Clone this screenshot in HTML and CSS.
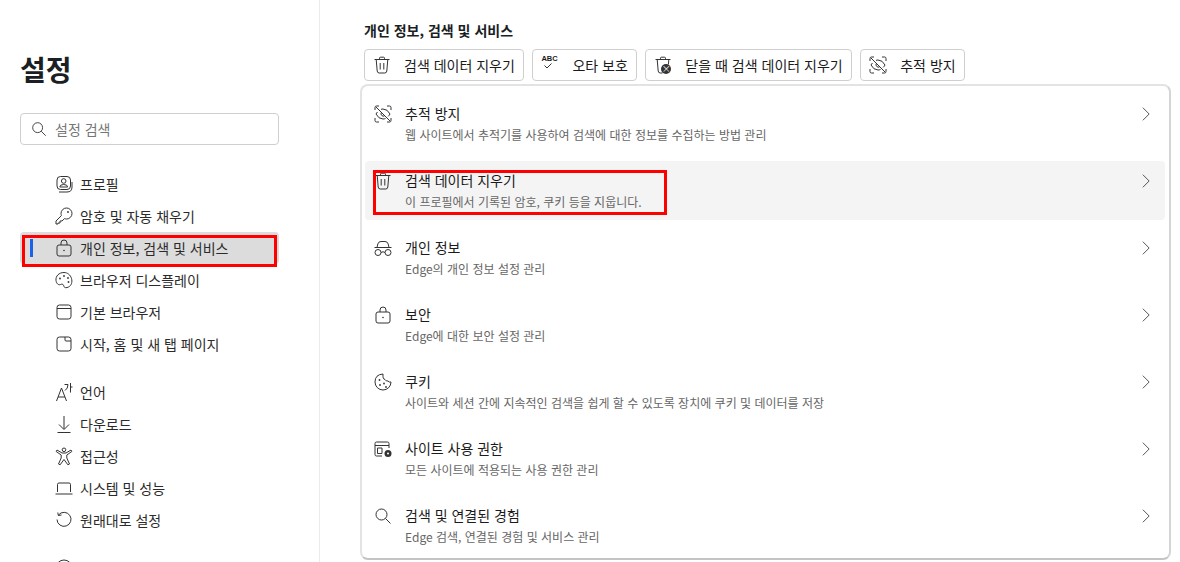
FILE: index.html
```html
<!DOCTYPE html>
<html lang="ko">
<head>
    <meta charset="UTF-8">
    <title>설정</title>
    <link rel="stylesheet" href="styles.css">
</head>
<body>
    <svg class="sprite" width="0" height="0">
        <symbol id="i-trash" viewBox="0 0 20 20"><path d="M2.500 4.500h15M7.500 4.500V3.200q0-1 1-1h3q1 0 1 1v1.300M4.200 4.500l1 11.500q.2 2 2 2h5.600q1.800 0 2-2l1-11.500M8.200 8v6.500M11.800 8v6.500"/></symbol>
        <symbol id="i-trash-open" viewBox="0 0 20 20"><path d="M2.500 4.500h15M7.500 4.500V3.200q0-1 1-1h3q1 0 1 1v1.300M4.200 4.500l1 11.500q.2 2 2 2h2.300M15.800 4.500l-.4 5"/></symbol>
        <symbol id="i-track" viewBox="0 0 20 20"><path d="M2 6V3.500Q2 2 3.500 2H6M14 2h2.500Q18 2 18 3.500V6M18 14v2.500q0 1.500-1.500 1.500H14M6 18H3.500Q2 18 2 16.500V14M3 3l14 14M4.500 8Q3.500 9 3 10q2.500 5 7 5 1.200 0 2.500-.5M8 5.400q1-.4 2-.4 4.500 0 7 5-.6 1.200-1.800 2.400M8.200 8.700a2.500 2.500 0 0 0 3.200 3.300"/></symbol>
        <symbol id="i-glasses" viewBox="0 0 20 20"><path d="M1.500 9.500h17M4 9.500l.8-3.500Q5.500 3.500 8 3.500h4q2.500 0 3.200 2.500l.8 3.500M8 14.500q2-1.500 4 0"/><circle cx="5" cy="14.500" r="3"/><circle cx="15" cy="14.500" r="3"/></symbol>
        <symbol id="i-lock" viewBox="0 0 20 20"><path d="M7 7V5a3 3 0 0 1 6 0v2M5 7h10q2 0 2 2v7q0 2-2 2H5q-2 0-2-2V9q0-2 2-2z"/><circle class="fill" cx="10" cy="12.500" r=".8"/></symbol>
        <symbol id="i-cookie" viewBox="0 0 20 20"><path d="M10 2q-8 .5-8 8a8 8 0 0 0 16 0q-2 .5-3-1-2 .5-3-1.500-2.500-.5-2-5.500z"/><circle class="fill" cx="6.500" cy="8" r=".9"/><circle class="fill" cx="7" cy="13" r=".9"/><circle class="fill" cx="11" cy="11.500" r=".9"/><circle class="fill" cx="13" cy="15" r=".9"/></symbol>
        <symbol id="i-perm" viewBox="0 0 20 20"><path d="M9 17H3.500Q2 17 2 15.500v-11Q2 3 3.500 3h11Q16 3 16 4.500V9M2 6.500h14M4.500 9H9v5.500H4.500z"/><circle class="fill" cx="15" cy="14.500" r="3.500"/><circle class="hole" cx="15" cy="14.500" r="1"/></symbol>
        <symbol id="i-search" viewBox="0 0 20 20"><circle cx="8.500" cy="8.500" r="5.500"/><path d="M12.500 12.500l5 5"/></symbol>
        <symbol id="i-chev" viewBox="0 0 20 20"><path d="M6.500 3l7 7-7 7"/></symbol>
        <symbol id="i-profile" viewBox="0 0 20 20"><rect x="3" y="2.500" width="13.500" height="13" rx="3.500"/><path d="M5 18h8q5 0 5-5V8"/><circle cx="9.700" cy="7" r="2.300"/><path d="M5.800 13q0-2.500 3.900-2.500t3.900 2.500z"/></symbol>
        <symbol id="i-key" viewBox="0 0 20 20"><path d="M12.500 2a5.500 5.500 0 0 1 0 11q-1 0-2-.4L8 15H6v2H4v1H2v-3l5.400-5.400Q7 8.500 7 7.500A5.500 5.500 0 0 1 12.500 2z"/><circle class="fill" cx="14" cy="6" r=".9"/></symbol>
        <symbol id="i-palette" viewBox="0 0 20 20"><path d="M10 2.500c-5 0-8.500 3.500-8 8 .4 3 2.500 5 4.500 4 2-1 3 0 3.500 2 .4 1.500 2.500 1.500 4.500.5 3-1.500 4-5 3-8.500-1-3.500-4-6-7.500-6z"/><circle class="fill" cx="6" cy="8.500" r=".9"/><circle class="fill" cx="10" cy="6" r=".9"/><circle class="fill" cx="14" cy="8" r=".9"/><circle class="fill" cx="14.500" cy="12" r=".9"/></symbol>
        <symbol id="i-browser" viewBox="0 0 20 20"><rect x="3" y="3" width="14" height="14" rx="2.500"/><path d="M3 6.500h14"/></symbol>
        <symbol id="i-start" viewBox="0 0 20 20"><path d="M5.500 3h9Q17 3 17 5.500v9q0 2.500-2.500 2.500h-9Q3 17 3 14.500v-9Q3 3 5.500 3zM11 3v3q0 1 1 1h5"/></symbol>
        <symbol id="i-lang" viewBox="0 0 20 20"><path d="M2.500 19L7.500 6l5 13M4 15h7M10.500 2.500H14q0 4-3 6M16.500 1V10.500M16.500 5h2"/></symbol>
        <symbol id="i-down" viewBox="0 0 20 20"><path d="M10 2v13M5 10.500l5 5 5-5M3.500 18.500h13"/></symbol>
        <symbol id="i-access" viewBox="0 0 20 20"><circle cx="10" cy="3.800" r="1.800"/><path d="M3 4l5 3h4l5-3 .8 1.500-5 3.500v3l2.700 6-1.600.8L10 13.500l-3.900 5.300-1.600-.8 2.700-6V9l-5-3.500z"/></symbol>
        <symbol id="i-laptop" viewBox="0 0 20 20"><path d="M3.500 14V6.500Q3.500 5 5 5h10q1.500 0 1.500 1.500V14M1.500 16h17"/></symbol>
        <symbol id="i-reset" viewBox="0 0 20 20"><path d="M4.500 5A7 7 0 1 1 3 9.500M3.800 2.500L4.300 5.500l3.200-.5"/></symbol>
        <symbol id="i-help" viewBox="0 0 20 20"><circle cx="10" cy="10" r="8"/></symbol>
    </svg>

    <div class="layout">
        <aside class="sidebar">
            <h1 class="sidebar-title">설정</h1>
            <div class="search-box">
                <svg class="icon search-icon"><use href="#i-search"/></svg>
                <span class="search-placeholder">설정 검색</span>
            </div>
            <nav class="nav">
                <div class="nav-group">
                    <a class="nav-item"><svg class="icon"><use href="#i-profile"/></svg>프로필</a>
                    <a class="nav-item"><svg class="icon"><use href="#i-key"/></svg>암호 및 자동 채우기</a>
                    <a class="nav-item active"><svg class="icon"><use href="#i-lock"/></svg>개인 정보, 검색 및 서비스</a>
                    <a class="nav-item"><svg class="icon"><use href="#i-palette"/></svg>브라우저 디스플레이</a>
                    <a class="nav-item"><svg class="icon"><use href="#i-browser"/></svg>기본 브라우저</a>
                    <a class="nav-item"><svg class="icon"><use href="#i-start"/></svg>시작, 홈 및 새 탭 페이지</a>
                </div>
                <div class="nav-group">
                    <a class="nav-item"><svg class="icon"><use href="#i-lang"/></svg>언어</a>
                    <a class="nav-item"><svg class="icon"><use href="#i-down"/></svg>다운로드</a>
                    <a class="nav-item"><svg class="icon"><use href="#i-access"/></svg>접근성</a>
                    <a class="nav-item"><svg class="icon"><use href="#i-laptop"/></svg>시스템 및 성능</a>
                    <a class="nav-item"><svg class="icon"><use href="#i-reset"/></svg>원래대로 설정</a>
                </div>
                <div class="nav-group">
                    <a class="nav-item"><svg class="icon"><use href="#i-help"/></svg></a>
                </div>
            </nav>
            <div class="mark mark-nav"></div>
        </aside>

        <main class="content">
            <h2 class="section-title">개인 정보, 검색 및 서비스</h2>
            <div class="chips">
                <button class="chip"><svg class="icon"><use href="#i-trash"/></svg>검색 데이터 지우기</button>
                <button class="chip">
                    <span class="abc-icon"><span class="abc-text">ABC</span><svg viewBox="0 0 10 6"><path d="M1.500 2.500l2.500 2.500 4.500-4.500"/></svg></span>오타 보호
                </button>
                <button class="chip">
                    <span class="icon-wrap"><svg class="icon"><use href="#i-trash-open"/></svg><span class="close-badge">×</span></span>닫을 때 검색 데이터 지우기
                </button>
                <button class="chip"><svg class="icon"><use href="#i-track"/></svg>추적 방지</button>
            </div>

            <section class="card">
                <div class="row">
                    <svg class="icon"><use href="#i-track"/></svg>
                    <div class="row-text">
                        <div class="row-title">추적 방지</div>
                        <div class="row-sub">웹 사이트에서 추적기를 사용하여 검색에 대한 정보를 수집하는 방법 관리</div>
                    </div>
                    <svg class="icon chev"><use href="#i-chev"/></svg>
                </div>
                <div class="row hover">
                    <svg class="icon"><use href="#i-trash"/></svg>
                    <div class="row-text">
                        <div class="row-title">검색 데이터 지우기</div>
                        <div class="row-sub">이 프로필에서 기록된 암호, 쿠키 등을 지웁니다.</div>
                    </div>
                    <svg class="icon chev"><use href="#i-chev"/></svg>
                    <div class="mark mark-row"></div>
                </div>
                <div class="row">
                    <svg class="icon"><use href="#i-glasses"/></svg>
                    <div class="row-text">
                        <div class="row-title">개인 정보</div>
                        <div class="row-sub">Edge의 개인 정보 설정 관리</div>
                    </div>
                    <svg class="icon chev"><use href="#i-chev"/></svg>
                </div>
                <div class="row">
                    <svg class="icon"><use href="#i-lock"/></svg>
                    <div class="row-text">
                        <div class="row-title">보안</div>
                        <div class="row-sub">Edge에 대한 보안 설정 관리</div>
                    </div>
                    <svg class="icon chev"><use href="#i-chev"/></svg>
                </div>
                <div class="row">
                    <svg class="icon"><use href="#i-cookie"/></svg>
                    <div class="row-text">
                        <div class="row-title">쿠키</div>
                        <div class="row-sub">사이트와 세션 간에 지속적인 검색을 쉽게 할 수 있도록 장치에 쿠키 및 데이터를 저장</div>
                    </div>
                    <svg class="icon chev"><use href="#i-chev"/></svg>
                </div>
                <div class="row">
                    <svg class="icon"><use href="#i-perm"/></svg>
                    <div class="row-text">
                        <div class="row-title">사이트 사용 권한</div>
                        <div class="row-sub">모든 사이트에 적용되는 사용 권한 관리</div>
                    </div>
                    <svg class="icon chev"><use href="#i-chev"/></svg>
                </div>
                <div class="row">
                    <svg class="icon"><use href="#i-search"/></svg>
                    <div class="row-text">
                        <div class="row-title">검색 및 연결된 경험</div>
                        <div class="row-sub">Edge 검색, 연결된 경험 및 서비스 관리</div>
                    </div>
                    <svg class="icon chev"><use href="#i-chev"/></svg>
                </div>
            </section>
        </main>
    </div>
</body>
</html>
```

FILE: styles.css
```css
* {
    box-sizing: border-box;
}

html, body {
    height: 562px;
    margin: 0;
    overflow: hidden;
}

body {
    font-family: "Noto Sans CJK KR", "Noto Sans", sans-serif;
    background: #fff;
    color: #1b1b1b;
}

.sprite {
    display: block;
    height: 0;
}

symbol path, symbol circle, symbol rect {
    fill: none;
    stroke: currentColor;
    stroke-width: 1;
}

symbol circle.fill {
    fill: currentColor;
    stroke: none;
}

symbol circle.hole {
    fill: #fff;
    stroke: none;
}

.icon {
    width: 20px;
    height: 20px;
    flex: none;
    color: #333;
    overflow: visible;
}

.layout {
    display: flex;
    height: 562px;
}

/* left column */
.sidebar {
    position: relative;
    width: 320px;
    flex: none;
    border-right: 1px solid #ebebeb;
    padding: 48px 40px 0 20px;
    overflow: hidden;
}

.sidebar-title {
    margin: 0 0 22px;
    font-size: 28px;
    line-height: 43px;
    font-weight: 700;
    color: #1b1f24;
}

.search-box {
    display: flex;
    align-items: center;
    gap: 7px;
    width: 259px;
    height: 32px;
    padding: 0 9px;
    border: 1px solid #cfcfcf;
    border-radius: 4px;
}

.search-icon {
    width: 18px;
    height: 18px;
}

.search-placeholder {
    font-size: 14px;
    color: #767676;
}

.nav {
    margin-top: 23px;
}

.nav-group {
    margin-bottom: 16px;
}

.nav-item {
    position: relative;
    display: flex;
    align-items: center;
    gap: 6px;
    width: 259px;
    height: 32px;
    padding-left: 34px;
    font-size: 14px;
    color: #2b2b2b;
}

.nav-item.active {
    background: #dcdcdc;
    border-radius: 4px;
}

.nav-item.active::before {
    content: "";
    position: absolute;
    left: 10px;
    top: 7px;
    width: 3px;
    height: 18px;
    background: #1a62e8;
}

.mark {
    position: absolute;
    border: 3px solid #f00;
    pointer-events: none;
}

.mark-nav {
    left: 22px;
    top: 235px;
    width: 255px;
    height: 32px;
}

/* right column */
.content {
    flex: 1;
    padding: 18px 9px 0 40px;
}

.section-title {
    margin: 0 0 7px 4px;
    font-size: 14px;
    line-height: 24px;
    font-weight: 700;
    color: #1b1f24;
}

.chips {
    display: flex;
    gap: 8px;
    margin-left: 4px;
}

.chip {
    display: flex;
    align-items: center;
    gap: 12px;
    height: 32px;
    padding: 0 8.5px 0 7px;
    border: 1px solid #cfcfcf;
    border-radius: 4px;
    background: #fff;
    font: 14px "Noto Sans CJK KR", "Noto Sans", sans-serif;
    color: #1b1b1b;
}

.abc-icon {
    display: flex;
    flex-direction: column;
    align-items: flex-start;
    width: 20px;
    margin-bottom: 7px;
}

.abc-text {
    font: 700 7.5px/9px "Liberation Sans", sans-serif;
    margin-left: 1px;
}

.abc-icon svg {
    width: 10px;
    height: 6px;
    margin-left: 3px;
    fill: none;
    stroke: #333;
}

.icon-wrap {
    position: relative;
    display: flex;
}

.close-badge {
    position: absolute;
    right: 2px;
    bottom: 1px;
    width: 10px;
    height: 10px;
    border-radius: 50%;
    background: #333;
    color: #fff;
    font-size: 9px;
    line-height: 10px;
    text-align: center;
}

.card {
    width: 811px;
    height: 476px;
    margin-top: 3px;
    padding: 8px 4px 0 3px;
    border: 2px solid #e3e3e3;
    border-bottom-color: #c4c4c4;
    border-right-color: #d4d4d4;
    border-radius: 8px;
}

.row {
    position: relative;
    display: flex;
    align-items: flex-start;
    gap: 12px;
    height: 59px;
    margin-bottom: 8px;
    padding: 9px 10px 0 8px;
    border-radius: 4px;
}

.row.hover {
    background: #f4f4f4;
}

.row > .icon {
    margin-top: 1px;
}

.row-text {
    flex: 1;
}

.row-title {
    font-size: 14px;
    line-height: 20px;
    color: #1b1b1b;
}

.row-sub {
    margin-top: 3px;
    font-size: 12px;
    line-height: 18px;
    color: #666;
}

.row > .chev {
    width: 18px;
    height: 18px;
    margin-top: 2px;
    color: #444;
}

.mark-row {
    left: 8px;
    top: 9px;
    width: 294px;
    height: 45px;
}
```
